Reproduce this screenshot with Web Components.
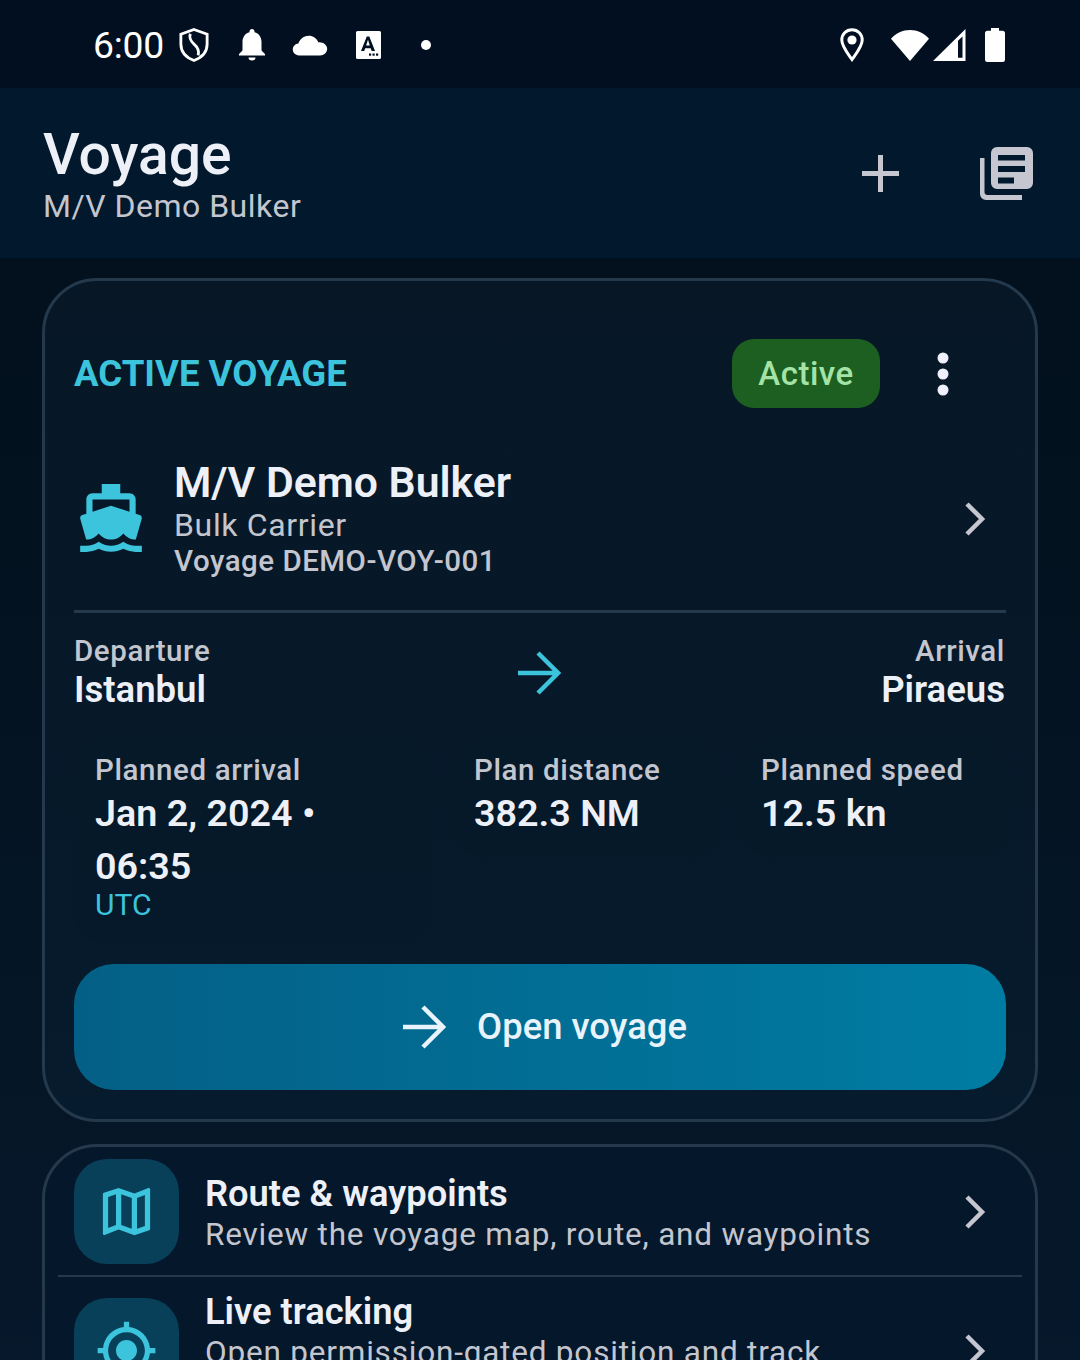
<!DOCTYPE html>
<html lang="en">
<head>
<meta charset="utf-8">
<title>Voyage</title>
<style>
html,body{margin:0;padding:0;height:1360px;overflow:hidden;background:#03121f;}
body{font-family:Roboto,"Liberation Sans",sans-serif;color:#eef0f8;}
</style>
</head>
<body>
<voyage-screen>
  <status-bar slot="status"></status-bar>
  <top-bar slot="top" heading="Voyage" sub="M/V Demo Bulker"></top-bar>
  <active-card>
    <stat-cell slot="stats" label="Planned arrival" value="Jan 2, 2024 • 06:35" note="UTC"></stat-cell>
    <stat-cell slot="stats" label="Plan distance" value="382.3 NM"></stat-cell>
    <stat-cell slot="stats" label="Planned speed" value="12.5 kn"></stat-cell>
  </active-card>
  <tile-list>
    <nav-tile icon="map" heading="Route &amp; waypoints">Review the voyage map, route, and waypoints</nav-tile>
    <nav-tile icon="target" heading="Live tracking">Open permission-gated position and track<br>history</nav-tile>
  </tile-list>
</voyage-screen>

<script>
// icon paths, all on a 24 box
const ICONS={
  ship:'M20 21c-1.39 0-2.78-.47-4-1.32-2.44 1.71-5.56 1.71-8 0C6.78 20.53 5.39 21 4 21H2v2h2c1.38 0 2.74-.35 4-.99 2.52 1.29 5.48 1.29 8 0 1.26.65 2.62.99 4 .99h2v-2h-2zM3.95 19H4c1.6 0 3.02-.88 4-2 .98 1.12 2.4 2 4 2s3.02-.88 4-2c.98 1.12 2.4 2 4 2h.05l1.89-6.68c.08-.26.06-.54-.06-.78s-.34-.42-.6-.5L20 10.62V6c0-1.1-.9-2-2-2h-3V1H9v3H6c-1.1 0-2 .9-2 2v4.62l-1.29.42c-.26.08-.48.26-.6.5s-.15.52-.06.78L3.95 19zM6 6h12v3.97L12 8 6 9.97V6z',
  map:'M20.5 3l-.16.03L15 5.1 9 3 3.36 4.9c-.21.07-.36.25-.36.48V20.5c0 .28.22.5.5.5l.16-.03L9 18.9l6 2.1 5.64-1.9c.21-.07.36-.25.36-.48V3.5c0-.28-.22-.5-.5-.5zM10 5.47l4 1.4v11.66l-4-1.4V5.47zm-5 .99l3-1.01v11.7l-3 1.16V6.46zm14 11.08l-3 1.01V6.86l3-1.16v11.84z',
  target:'M12 8c-2.21 0-4 1.79-4 4s1.79 4 4 4 4-1.79 4-4-1.79-4-4-4zm8.94 3c-.46-4.17-3.77-7.48-7.94-7.94V1h-2v2.06C6.83 3.52 3.52 6.83 3.06 11H1v2h2.06c.46 4.17 3.77 7.48 7.94 7.94V23h2v-2.06c4.17-.46 7.48-3.77 7.94-7.94H23v-2h-2.06zM12 19c-3.87 0-7-3.13-7-7s3.13-7 7-7 7 3.13 7 7-3.13 7-7 7z'
};

class VoyageScreen extends HTMLElement{
  constructor(){
    super();
    this.attachShadow({mode:'open'}).innerHTML=`
    <style>
    :host{display:flex;flex-direction:column;height:1360px;overflow:hidden;
      background:linear-gradient(180deg,#03101e 0,#03121f 40%,#06182b 100%);}
    main{flex:none;padding:20px 42px 0;display:flex;flex-direction:column;gap:22px;}
    </style>
    <slot name="status"></slot>
    <slot name="top"></slot>
    <main><slot></slot></main>`;
  }
}

class StatusBar extends HTMLElement{
  constructor(){
    super();
    this.attachShadow({mode:'open'}).innerHTML=`
    <style>
    :host{display:flex;flex:none;align-items:center;height:88px;padding:2px 75px 0 93px;box-sizing:border-box;
      background:#010f20;color:#fff;font-size:37.3px;}
    .time{width:86px;letter-spacing:-.2px;font-weight:400;line-height:86px;}
    .left{display:flex;align-items:center;}
    .right{margin-left:auto;display:flex;align-items:center;}
    svg{display:block;fill:#fff;}
    </style>
    <div class="left">
      <span class="time">6:00</span>
      <svg width="30" height="36" viewBox="0 0 32 36"><path d="M16 1.500 30 6.500V17c0 8.200-5.600 14.500-14 17.500C7.600 31.500 2 25.200 2 17V6.500z" fill="none" stroke="#fff" stroke-width="3"/><path d="M12 6c-1.500 5 .5 8 4 11s6 6 4.500 12" fill="none" stroke="#fff" stroke-width="3"/></svg>
      <svg width="28" height="34" viewBox="0 0 28 34" style="margin-left:29px"><path d="M14 1c1.500 0 2.500 1 2.500 2.500v.8C21 5.500 23.500 9.300 23.500 14v8.500L27 26v1.500H1V26l3.500-3.500V14c0-4.700 2.500-8.500 7-9.700v-.8C11.500 2 12.500 1 14 1z"/><path d="M10.500 29.500h7a3.500 3 0 0 1-7 0z"/></svg>
      <svg width="36" height="21" viewBox="0 0 37 22" style="margin-left:26px"><path d="M8 21.500C3.500 21.500.5 18.800.5 15.200c0-3.300 2.500-5.900 5.800-6.200C8.200 4 12.300.8 17.200.8c4.500 0 8.200 2.700 10 6.800.4-.1.700-.1 1.100-.1 4.500 0 8.200 3 8.200 7 0 3.900-3.300 7-7.500 7z"/></svg>
      <svg width="25" height="28" viewBox="0 0 25 28" style="margin-left:28px"><path fill-rule="evenodd" d="M1.500 0h22A1.500 1.500 0 0 1 25 1.500v25a1.500 1.500 0 0 1-1.500 1.500h-22A1.500 1.500 0 0 1 0 26.500v-25A1.500 1.500 0 0 1 1.500 0zM10.800 5.500 5 20h3.200l1-2.800h5.500l1 2.800H19L13.300 5.500zM12 8.800l1.800 5.700h-3.700z"/><rect x="13" y="22.500" width="2.200" height="2.200" fill="#010f20"/><rect x="16.500" y="22.500" width="2.200" height="2.200" fill="#010f20"/><rect x="20" y="22.500" width="2.200" height="2.200" fill="#010f20"/></svg>
      <svg width="10" height="10" viewBox="0 0 10 10" style="margin-left:40px"><circle cx="5" cy="5" r="5"/></svg>
    </div>
    <div class="right">
      <svg width="24" height="34" viewBox="0 0 24 34"><path d="M12 1.800C6 1.800 1.800 6.300 1.800 12c0 6.500 6 13.500 10.200 19.500C16.200 25.500 22.200 18.500 22.200 12 22.200 6.300 18 1.800 12 1.800z" fill="none" stroke="#fff" stroke-width="3"/><circle cx="12" cy="12" r="4.600"/></svg>
      <svg width="38" height="33" viewBox="0 0 39 33" style="margin-left:27px"><path d="M0 9.500C5 3.700 12 .500 19.500.500S34 3.700 39 9.500L19.500 32.500z"/></svg>
      <svg width="33" height="32" viewBox="0 0 33 32" style="margin-left:4px"><path fill-rule="evenodd" d="M32.500 0v32H0zM29.500 7.500 25 11.800V28.800h4.500z"/></svg>
      <svg width="20" height="34" viewBox="0 0 20 34" style="margin-left:19px"><path d="M6 0h8v2.800h3.500A2.500 2.500 0 0 1 20 5.300v26.200a2.500 2.500 0 0 1-2.500 2.500h-15A2.500 2.500 0 0 1 0 31.500V5.300a2.500 2.500 0 0 1 2.500-2.500H6z"/></svg>
    </div>`;
  }
}

class TopBar extends HTMLElement{
  constructor(){
    super();
    this.attachShadow({mode:'open'}).innerHTML=`
    <style>
    :host{display:flex;flex:none;align-items:center;height:170px;padding:0 47px 0 43px;box-sizing:border-box;background:#02182c;}
    .titles{flex:1;margin-top:-1px;}
    h1{margin:0;font:500 57px/66px Roboto,sans-serif;color:#eef0f8;}
    p{margin:0;font:400 32px/36px Roboto,sans-serif;color:#c3c6cf;letter-spacing:.5px;}
    svg{display:block;fill:#c5c6d0;}
    </style>
    <div class="titles"><h1></h1><p></p></div>
    <svg width="37" height="37" viewBox="0 0 37 37" style="margin-right:81px"><path d="M16 0h5v16h16v5H21v16h-5V21H0v-5h16z"/></svg>
    <svg width="53" height="53" viewBox="0 0 53 53"><path fill-rule="evenodd" d="M17 0h30a6 6 0 0 1 6 6v30a6 6 0 0 1-6 6H17a6 6 0 0 1-6-6V6a6 6 0 0 1 6-6zM18 8v5.500h27V8zM18 19v6h27v-6zM18 30.500v6h16v-6z"/><path d="M0 11h4.500v34c0 1.800 1.200 3 3 3h34.500v5H6a6 6 0 0 1-6-6z"/></svg>`;
    this.shadowRoot.querySelector('h1').textContent=this.getAttribute('heading');
    this.shadowRoot.querySelector('p').textContent=this.getAttribute('sub');
  }
}

class ActiveCard extends HTMLElement{
  constructor(){
    super();
    this.attachShadow({mode:'open'}).innerHTML=`
    <style>
    :host{display:block;box-sizing:border-box;height:844px;padding:58px 29px 29px;border:3px solid #25394c;border-radius:55px;
      background:linear-gradient(180deg,#071726 0,#061b2d 100%);}
    .head{display:flex;align-items:center;height:69px;}
    .eyebrow{flex:1;font:700 36.600px/44px Roboto,sans-serif;color:#3cc4dc;}
    .badge{box-sizing:border-box;width:148px;height:69px;border-radius:22px;background:#1c5f20;color:#a4e3a7;
      font:500 33px/69px Roboto,sans-serif;text-align:center;letter-spacing:.5px;}
    .more{width:126px;display:flex;justify-content:center;}
    .more svg{display:block;fill:#eef0fb;}
    .ship{display:flex;align-items:center;margin-top:50px;height:122px;}
    .ship .ico{display:block;width:74px;height:74px;margin-top:-2px;fill:#3cc4dc;}
    .ship .txt{flex:1;margin:-2px 0 0 26px;min-width:0;}
    .name{font:600 42.700px/49px Roboto,sans-serif;color:#eef0f8;}
    .type{font:400 32px/36px Roboto,sans-serif;color:#c3c6cf;letter-spacing:.65px;}
    .voy{font:500 29.500px/36px Roboto,sans-serif;color:#c3c6cf;letter-spacing:.5px;}
    .chev{display:block;margin-right:20px;fill:none;stroke:#c5c6d0;stroke-width:4.500;}
    .rule{height:3px;margin-top:30px;background:#25394c;}
    .route{display:flex;align-items:flex-start;margin-top:20px;}
    .route>div{flex:1;}
    .route .end{text-align:right;padding-right:1px;}
    .lbl{font:500 29.500px/36px Roboto,sans-serif;color:#c3c6cf;letter-spacing:.6px;}
    .port{font:600 36.500px/41px Roboto,sans-serif;color:#eef0f8;}
    .arrow{flex:none!important;width:44px;margin:18px 0 0 -1px;}
    .arrow svg,.cta svg{display:block;fill:none;stroke-linecap:butt;}
    .stats{display:grid;grid-template-columns:358px 266px 266px;gap:21px;margin-top:25px;height:210px;}
    .cta{display:flex;align-items:center;justify-content:center;gap:31px;height:126px;margin-top:19px;padding-left:9px;box-sizing:border-box;border-radius:40px;
      background:linear-gradient(90deg,#045f86 0,#007ca3 100%);color:#e9f3fb;font:500 36.400px/44px Roboto,sans-serif;}
    </style>
    <div class="head">
      <div class="eyebrow">ACTIVE VOYAGE</div>
      <div class="badge">Active</div>
      <div class="more"><svg width="12" height="44" viewBox="0 0 12 44"><circle cx="6" cy="6" r="5.500"/><circle cx="6" cy="22" r="5.500"/><circle cx="6" cy="38" r="5.500"/></svg></div>
    </div>
    <div class="ship">
      <svg class="ico" viewBox="0 0 24 24"><path d="${ICONS.ship}"/></svg>
      <div class="txt">
        <div class="name">M/V Demo Bulker</div>
        <div class="type">Bulk Carrier</div>
        <div class="voy">Voyage DEMO-VOY-001</div>
      </div>
      <svg class="chev" width="22" height="34" viewBox="0 0 22 34"><path d="M3 2 18 17 3 32"/></svg>
    </div>
    <div class="rule"></div>
    <div class="route">
      <div><div class="lbl">Departure</div><div class="port">Istanbul</div></div>
      <div class="arrow"><svg width="44" height="44" viewBox="0 0 44 44" stroke="#3cc4dc" stroke-width="4.500"><path d="M1 22H40M21 2l20 20-20 20"/></svg></div>
      <div class="end"><div class="lbl">Arrival</div><div class="port">Piraeus</div></div>
    </div>
    <div class="stats"><slot name="stats"></slot></div>
    <div class="cta"><svg width="44" height="44" viewBox="0 0 44 44" stroke="#e9f3fb" stroke-width="4.500"><path d="M1 22H40M21 2l20 20-20 20"/></svg><span>Open voyage</span></div>`;
  }
}

class StatCell extends HTMLElement{
  constructor(){
    super();
    this.attachShadow({mode:'open'}).innerHTML=`
    <style>
    :host{display:block;box-sizing:border-box;padding:17px 21px 17px;border-radius:33px;background:rgba(4,20,36,.08);align-self:start;}
    .l{font:500 29.500px/37px Roboto,sans-serif;color:#c3c6cf;letter-spacing:.6px;white-space:nowrap;margin-bottom:-2px;}
    .v{font:600 37.700px/53px Roboto,sans-serif;color:#eef0f8;}
    .n{font:400 30px/24px Roboto,sans-serif;color:#3cc4dc;padding-bottom:11px;}
    </style>
    <div class="l"></div><div class="v"></div><div class="n"></div>`;
    const s=this.shadowRoot;
    s.querySelector('.l').textContent=this.getAttribute('label');
    s.querySelector('.v').textContent=this.getAttribute('value');
    if(this.hasAttribute('note')) s.querySelector('.n').textContent=this.getAttribute('note');
    else s.querySelector('.n').style.display='none';
  }
}

class TileList extends HTMLElement{
  constructor(){
    super();
    this.attachShadow({mode:'open'}).innerHTML=`
    <style>
    :host{display:block;box-sizing:border-box;border:3px solid #25394c;border-radius:55px;background:#05172a;padding:0 13px;}
    ::slotted(nav-tile:not(:first-child)){border-top:2px solid #25394c;padding-top:10px;}
    </style>
    <slot></slot>`;
  }
}

class NavTile extends HTMLElement{
  constructor(){
    super();
    const d=ICONS[this.getAttribute('icon')];
    this.attachShadow({mode:'open'}).innerHTML=`
    <style>
    :host{display:flex;align-items:center;padding:12px 36px 11px 16px;}
    .ico{flex:none;width:105px;height:105px;border-radius:33px;background:#083f59;display:flex;align-items:center;justify-content:center;}
    .ico svg{display:block;fill:#3cc4dc;}
    .txt{flex:1;margin-left:26px;min-width:0;}
    .t{font:600 36.300px/40px Roboto,sans-serif;color:#eef0f8;padding-top:5px;}
    .d{font:400 31.500px/41px Roboto,sans-serif;color:#c3c6cf;letter-spacing:.8px;white-space:nowrap;}
    .chev{display:block;fill:none;stroke:#c5c6d0;stroke-width:4.500;}
    </style>
    <div class="ico"><svg width="63" height="63" viewBox="0 0 24 24"><path d="${d}"/></svg></div>
    <div class="txt"><div class="t"></div><div class="d"><slot></slot></div></div>
    <svg class="chev" width="22" height="34" viewBox="0 0 22 34"><path d="M3 2 18 17 3 32"/></svg>`;
    this.shadowRoot.querySelector('.t').textContent=this.getAttribute('heading');
  }
}

customElements.define('voyage-screen',VoyageScreen);
customElements.define('status-bar',StatusBar);
customElements.define('top-bar',TopBar);
customElements.define('active-card',ActiveCard);
customElements.define('stat-cell',StatCell);
customElements.define('tile-list',TileList);
customElements.define('nav-tile',NavTile);
</script>
</body>
</html>
